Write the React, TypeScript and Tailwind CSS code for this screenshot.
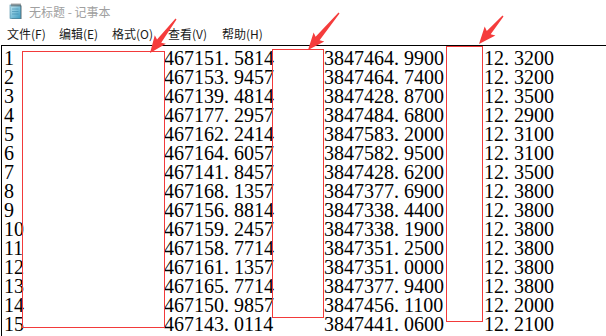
import React from "react";

const ROWS = [
  ["1", "467151.5814", "3847464.9900", "12.3200"],
  ["2", "467153.9457", "3847464.7400", "12.3200"],
  ["3", "467139.4814", "3847428.8700", "12.3500"],
  ["4", "467177.2957", "3847484.6800", "12.2900"],
  ["5", "467162.2414", "3847583.2000", "12.3100"],
  ["6", "467164.6057", "3847582.9500", "12.3100"],
  ["7", "467141.8457", "3847428.6200", "12.3500"],
  ["8", "467168.1357", "3847377.6900", "12.3800"],
  ["9", "467156.8814", "3847338.4400", "12.3800"],
  ["10", "467159.2457", "3847338.1900", "12.3800"],
  ["11", "467158.7714", "3847351.2500", "12.3800"],
  ["12", "467161.1357", "3847351.0000", "12.3800"],
  ["13", "467165.7714", "3847377.9400", "12.3800"],
  ["14", "467150.9857", "3847456.1100", "12.2000"],
  ["15", "467143.0114", "3847441.0600", "12.2100"],
];

const MENU = [
  { l: "文件(F)", w: "w-[52px]" },
  { l: "编辑(E)", w: "w-[53px]" },
  { l: "格式(O)", w: "w-[56px]" },
  { l: "查看(V)", w: "w-[54px]" },
  { l: "帮助(H)", w: "w-[54px]" },
];

// SimSun-ish look: digits are already 10px wide at 20px, only the dot needs a full cell
function Num({ v }: { v: string }) {
  const [a, b] = v.split(".");
  if (b === undefined) return <>{a}</>;
  return (
    <>
      {a}
      <span className="inline-block w-[10px]">.</span>
      {b}
    </>
  );
}

function arrow(tx: number, ty: number, px: number, py: number) {
  const dx = px - tx, dy = py - ty;
  const len = Math.hypot(dx, dy);
  const ux = dx / len, uy = dy / len;
  const nx = -uy, ny = ux;
  const head = 15, wing = 7, neck = 2.6, tail = 0.6;
  const bx = px - ux * head, by = py - uy * head;
  const wx = px - ux * (head + 2), wy = py - uy * (head + 2);
  const pts = [
    [tx + nx * tail, ty + ny * tail],
    [bx + nx * neck, by + ny * neck],
    [wx + nx * wing, wy + ny * wing],
    [px, py],
    [wx - nx * wing, wy - ny * wing],
    [bx - nx * neck, by - ny * neck],
    [tx - nx * tail, ty - ny * tail],
  ];
  return pts.map((p) => p[0].toFixed(1) + "," + p[1].toFixed(1)).join(" ");
}

function NotepadIcon() {
  return (
    <svg width="14" height="17" viewBox="0 0 14 17">
      <defs>
        <linearGradient id="np" x1="0" y1="0" x2="1" y2="1">
          <stop offset="0" stopColor="#bfe6f2" />
          <stop offset="1" stopColor="#3d9bc0" />
        </linearGradient>
      </defs>
      <rect x="2.5" y="2.5" width="10" height="13.5" fill="#5a6a70" />
      <rect x="1" y="2" width="10.5" height="13.5" fill="url(#np)" stroke="#4a8aa6" strokeWidth="0.6" />
      <line x1="3" y1="6" x2="9.5" y2="6" stroke="#2f7fa3" strokeWidth="0.5" />
      <line x1="3" y1="8.5" x2="9.5" y2="8.5" stroke="#2f7fa3" strokeWidth="0.5" />
      <line x1="3" y1="11" x2="9.5" y2="11" stroke="#2f7fa3" strokeWidth="0.5" />
      {[2.5, 4.5, 6.5, 8.5, 10.5].map((x) => (
        <rect key={x} x={x} y="0.5" width="1" height="3" fill="#555" />
      ))}
    </svg>
  );
}

export default function App() {
  return (
    <div className="relative w-[606px] h-[336px] bg-white overflow-hidden flex flex-col">
      {/* title bar */}
      <div className="h-[23px] flex items-center pl-[9px] shrink-0">
        <NotepadIcon />
        <span className="ml-[6px] text-[12px] text-[#a0a0a0] font-['Noto_Sans_CJK_SC',sans-serif] leading-none">
          无标题 - 记事本
        </span>
      </div>

      {/* menu bar */}
      <div className="h-[22px] flex items-center pl-[7px] shrink-0 text-[12px] text-[#1a1a1a] font-['Noto_Sans_CJK_SC',sans-serif] leading-none">
        {MENU.map((m) => (
          <span key={m.l} className={m.w}>{m.l}</span>
        ))}
      </div>

      {/* edit area */}
      <div className="flex-1 ml-[1px] border-t border-l border-black pt-[3px] pl-[2px] font-['Liberation_Serif',serif] text-[20px] leading-[19px] text-black">
        {ROWS.map((r) => (
          <div key={r[0]} className="grid grid-cols-[160px_160px_160px_auto] whitespace-nowrap">
            <span><Num v={r[0]} /></span>
            <span><Num v={r[1]} /></span>
            <span><Num v={r[2]} /></span>
            <span><Num v={r[3]} /></span>
          </div>
        ))}
      </div>

      {/* annotations */}
      <div className="absolute left-[22px] top-[51px] w-[143px] h-[277px] border border-[#f23a3a]" />
      <div className="absolute left-[272px] top-[49px] w-[52px] h-[269px] border border-[#f23a3a]" />
      <div className="absolute left-[446px] top-[46px] w-[37px] h-[276px] border border-[#f23a3a]" />
      <svg className="absolute left-0 top-0" width="606" height="336">
        <polygon points={arrow(176, 19, 150, 53)} fill="#f53c3c" />
        <polygon points={arrow(339, 13, 308, 50)} fill="#f53c3c" />
        <polygon points={arrow(503, 16, 479, 44)} fill="#f53c3c" />
      </svg>
    </div>
  );
}
